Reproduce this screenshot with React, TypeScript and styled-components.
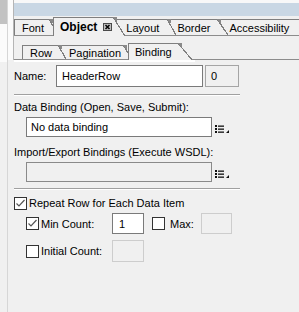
import styled, { createGlobalStyle } from "styled-components";

const GlobalStyle = createGlobalStyle`
  html, body {
    margin: 0;
    padding: 0;
    background: #f0f0f0;
  }
  body {
    font-family: "Liberation Sans", Arial, sans-serif;
    font-size: 11px;
    color: #000;
  }
`;

const LINE = "#7f7f7f";

const Window = styled.div`
  display: flex;
  width: 299px;
  height: 312px;
  overflow: hidden;
  background: #f0f0f0;
`;

const Gutter = styled.div`
  width: 7px;
  flex: none;
  display: flex;
  flex-direction: column;
  border-right: 1px solid #d6d6d6;
`;

const GutterTop = styled.div`
  height: 24px;
  background: #c2c2c2;
`;

const GutterMid = styled.div`
  height: 38px;
  background: #fbfbfb;
`;

const Panel = styled.div`
  flex: 1;
  min-width: 0;
  display: flex;
  flex-direction: column;
`;

const Header = styled.div`
  display: flex;
  flex-direction: column;
  padding-left: 6px;
  box-shadow: inset 5px 0 0 #fbfbfb, inset 6px 0 0 #b5b5b5;
`;

const TopBand = styled.div`
  height: 13px;
  border-top: 3px solid #f8f8f8;
  background: #c9d7e4;
`;

const TabRow = styled.div<{ $height: number; $indent?: number }>`
  display: flex;
  align-items: flex-end;
  height: ${(p) => p.$height}px;
  padding-left: ${(p) => p.$indent ?? 0}px;
  border-bottom: 1px solid #8c8c8c;
`;

interface TabProps {
  $h: number;
  $active?: boolean;
  $lead?: boolean;
  $slant: number;
  $pl: number;
  $pr: number;
  $overlap?: number;
  $bold?: boolean;
}

const Tab = styled.div<TabProps>`
  position: relative;
  box-sizing: border-box;
  display: flex;
  align-items: center;
  gap: 6px;
  flex: none;
  height: ${(p) => p.$h}px;
  padding: 0 ${(p) => p.$pr}px 0 ${(p) => p.$pl}px;
  margin-right: ${(p) => p.$slant}px;
  margin-left: ${(p) => (p.$overlap ? -p.$overlap : 0)}px;
  margin-bottom: ${(p) => (p.$active ? -1 : 0)}px;
  border-top: 1px solid ${LINE};
  border-left: ${(p) => (p.$lead || p.$active ? `1px solid ${LINE}` : "none")};
  background: #f0f0f0;
  white-space: nowrap;
  z-index: ${(p) => (p.$active ? 2 : "auto")};
  font-weight: ${(p) => (p.$bold ? 700 : 400)};
  font-size: ${(p) => (p.$bold ? 12 : 11)}px;

  &::before {
    content: ${(p) => (p.$lead || p.$active ? "none" : '""')};
    position: absolute;
    top: -1px;
    left: -10px;
    width: 10px;
    height: 1px;
    background: ${LINE};
  }

  &::after {
    content: "";
    position: absolute;
    top: -1px;
    left: 100%;
    width: ${(p) => p.$slant}px;
    height: calc(100% + 1px);
    z-index: 1;
    background:
      linear-gradient(to top right, transparent 50%, #8a8a8a 50%) top left / 4px 4px no-repeat,
      linear-gradient(
        to top right,
        #f0f0f0 calc(50% - 0.6px),
        ${LINE} calc(50% - 0.6px),
        ${LINE} calc(50% + 0.6px),
        transparent calc(50% + 0.6px)
      );
  }
`;

const CloseBox = styled.svg`
  display: block;
  flex: none;
`;

const Content = styled.div`
  display: flex;
  flex-direction: column;
  padding-left: 6px;
`;

const Sheen = styled.div`
  width: 181px;
  height: 2px;
  background: #ffffff;
`;

const NameRow = styled.div`
  display: flex;
  align-items: center;
  height: 22px;
  margin-top: 3px;
`;

const NameLabel = styled.span`
  width: 42px;
  flex: none;
`;

const Field = styled.div<{ $w: number; $h: number; $disabled?: boolean; $pl?: number }>`
  box-sizing: border-box;
  display: flex;
  align-items: center;
  flex: none;
  width: ${(p) => p.$w}px;
  height: ${(p) => p.$h}px;
  padding-left: ${(p) => p.$pl ?? 5}px;
  border: 1px solid ${(p) => (p.$disabled ? "#cdcdcd" : "#7a7a7a")};
  background: ${(p) => (p.$disabled ? "#f0f0f0" : "#ffffff")};
  white-space: nowrap;
`;

const IndexBox = styled(Field)`
  margin-left: 2px;
  border-color: #a5a5a5;
  background: #f0f0f0;
`;

const WsdlField = styled(Field)`
  border-color: #8a8a8a;
  background: #f0f0f0;
`;

const Separator = styled.div<{ $top: number }>`
  width: 226px;
  margin-top: ${(p) => p.$top}px;
  border-top: 1px solid #a0a0a0;
  border-bottom: 1px solid #ffffff;
`;

const Label = styled.div<{ $top: number }>`
  height: 14px;
  line-height: 14px;
  margin-top: ${(p) => p.$top}px;
  white-space: nowrap;
`;

const FieldRow = styled.div`
  display: flex;
  align-items: flex-end;
  margin-top: 3px;
  padding-left: 12px;
`;

const MenuIcon = styled.svg`
  display: block;
  flex: none;
  margin: 0 0 4px 3px;
`;

const CheckRow = styled.div<{ $top: number; $h: number; $indent?: number }>`
  display: flex;
  align-items: center;
  height: ${(p) => p.$h}px;
  margin-top: ${(p) => p.$top}px;
  padding-left: ${(p) => p.$indent ?? 0}px;
  white-space: nowrap;
`;

const Box = styled.div`
  box-sizing: border-box;
  width: 13px;
  height: 13px;
  flex: none;
  border: 1px solid #333333;
  background: #ffffff;
  margin-right: 2px;
`;

const CountLabel = styled.span<{ $w?: number }>`
  width: ${(p) => (p.$w ? `${p.$w}px` : "auto")};
  flex: none;
`;

const Spacer = styled.div<{ $w: number }>`
  width: ${(p) => p.$w}px;
  flex: none;
`;

function CheckBox({ checked }: { checked?: boolean }) {
  return (
    <Box>
      {checked && (
        <svg width="11" height="11" viewBox="0 0 11 11">
          <path d="M1.5 5.5 L4 8 L9.5 2" fill="none" stroke="#555" strokeWidth="1.2" />
        </svg>
      )}
    </Box>
  );
}

function ListMenu() {
  return (
    <MenuIcon width="15" height="8" viewBox="0 0 15 8">
      <rect x="0" y="0" width="2" height="2" fill="#111" />
      <rect x="0" y="3" width="2" height="2" fill="#111" />
      <rect x="0" y="6" width="2" height="2" fill="#111" />
      <rect x="3" y="0.5" width="6" height="1.3" fill="#111" />
      <rect x="3" y="3.5" width="6" height="1.3" fill="#111" />
      <rect x="3" y="6.5" width="6" height="1.3" fill="#111" />
      <polygon points="11,8 14,8 14,5" fill="#111" />
    </MenuIcon>
  );
}

export default function App() {
  return (
    <>
      <GlobalStyle />
      <Window>
        <Gutter>
          <GutterTop />
          <GutterMid />
        </Gutter>
        <Panel>
          <Header>
            <TopBand />
            <TabRow $height={19}>
              <Tab $h={16} $lead $slant={9} $pl={7} $pr={5}>Font</Tab>
              <Tab $h={19} $active $bold $slant={12} $pl={6} $pr={1} $overlap={5}>
                Object
                <CloseBox width="9" height="8" viewBox="0 0 9 8">
                  <rect x="0.5" y="0.5" width="8" height="7" fill="#bdbdbd" stroke="#4a4a4a" />
                  <path d="M2.5 2 L6.5 6 M6.5 2 L2.5 6" stroke="#000" strokeWidth="1.5" />
                </CloseBox>
              </Tab>
              <Tab $h={16} $slant={9} $pl={1} $pr={8}>Layout</Tab>
              <Tab $h={16} $slant={11} $pl={1} $pr={7}>Border</Tab>
              <Tab $h={16} $slant={10} $pl={1} $pr={14}>Accessibility</Tab>
            </TabRow>
            <TabRow $height={23} $indent={8}>
              <Tab $h={14} $lead $slant={8} $pl={7} $pr={6}>Row</Tab>
              <Tab $h={14} $slant={9} $pl={3} $pr={2}>Pagination</Tab>
              <Tab $h={17} $active $slant={14} $pl={6} $pr={6} $overlap={4}>Binding</Tab>
            </TabRow>
          </Header>
          <Content>
            <Sheen />
            <NameRow>
              <NameLabel>Name:</NameLabel>
              <Field $w={147} $h={22}>HeaderRow</Field>
              <IndexBox $w={34} $h={22}>0</IndexBox>
            </NameRow>
            <Separator $top={7} />
            <Label $top={4}>Data Binding (Open, Save, Submit):</Label>
            <FieldRow>
              <Field $w={186} $h={20} $pl={4}>No data binding</Field>
              <ListMenu />
            </FieldRow>
            <Label $top={8}>Import/Export Bindings (Execute WSDL):</Label>
            <FieldRow>
              <WsdlField $w={186} $h={20} $pl={4} />
              <ListMenu />
            </FieldRow>
            <Separator $top={6} />
            <CheckRow $top={6} $h={14}>
              <CheckBox checked />
              Repeat Row for Each Data Item
            </CheckRow>
            <CheckRow $top={3} $h={21} $indent={12}>
              <CheckBox checked />
              <CountLabel $w={71}>Min Count:</CountLabel>
              <Field $w={32} $h={21} $pl={6}>1</Field>
              <Spacer $w={8} />
              <CheckBox />
              <CountLabel>&nbsp;Max:</CountLabel>
              <Spacer $w={7} />
              <Field $w={31} $h={21} $disabled />
            </CheckRow>
            <CheckRow $top={6} $h={22} $indent={12}>
              <CheckBox />
              <CountLabel $w={71}>Initial Count:</CountLabel>
              <Field $w={32} $h={22} $disabled />
            </CheckRow>
          </Content>
        </Panel>
      </Window>
    </>
  );
}
